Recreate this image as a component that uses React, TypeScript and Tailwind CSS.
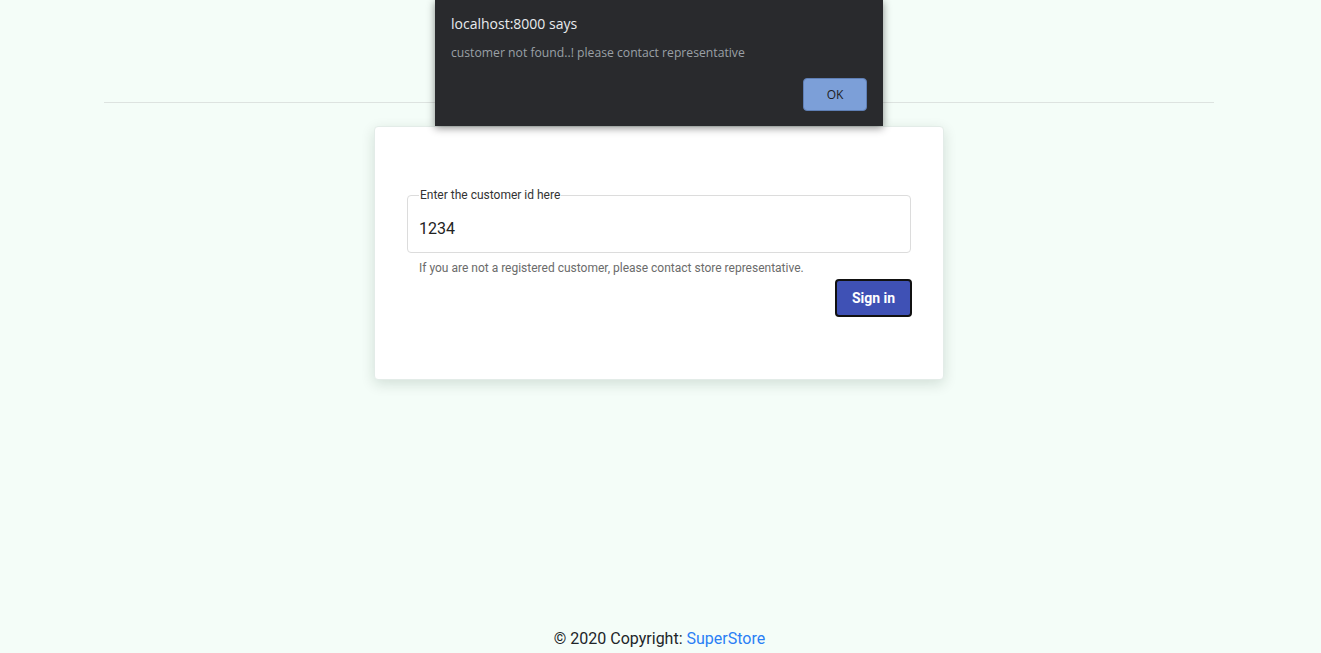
import { useState } from "react";

const AlertDialog = () => (
  <div className="absolute left-[435px] top-0 w-[448px] h-[126px] bg-[#292a2d] shadow-[0_2px_8px_rgba(0,0,0,0.45)] font-['Open_Sans',sans-serif]">
    <div className="px-4 pt-[14px]">
      <div className="text-[14px] leading-5 text-[#e8eaed]">localhost:8000 says</div>
      <div className="mt-[9px] text-[12.2px] leading-5 text-[#9aa0a6]">
        customer not found..! please contact representative
      </div>
      <div className="mt-[15px] flex justify-end">
        <button className="h-[33px] w-16 rounded bg-[#7c9fd8] border border-[#5f7fb5] text-[12px] text-[#202124]">
          OK
        </button>
      </div>
    </div>
  </div>
);

const LoginCard = () => {
  const [customerId, setCustomerId] = useState("1234");

  return (
    <div className="mx-auto w-[570px] rounded bg-white pl-[32px] pr-[31px] pt-[64px] pb-[62px] shadow-[0_4px_14px_rgba(0,40,20,0.14)] border border-[#e3ece8]">
      {/* Outlined text field */}
      <fieldset className="h-[64px] -mt-[2px] mr-[1px] rounded border border-[#dcdcdc] px-[11px]">
        <legend className="px-[1px] text-[12px] leading-3 text-[#333]">
          Enter the customer id here
        </legend>
        <input
          value={customerId}
          onChange={(e) => setCustomerId(e.target.value)}
          className="mt-[16px] w-full bg-transparent text-[16px] text-[#222] outline-none"
        />
      </fieldset>
      <p className="mt-[7px] pl-[12px] text-[12px] leading-4 text-[#6b6b6b]">
        If you are not a registered customer, please contact store representative.
      </p>
      <div className="mt-[3px] flex justify-end">
        <button className="h-[38px] w-[77px] rounded border-2 border-[#111] bg-[#3f51b5] text-[14px] font-bold text-white">
          Sign in
        </button>
      </div>
    </div>
  );
};

export default function App() {
  return (
    <div className="relative flex min-h-screen flex-col bg-[#f4fdf8] font-['Roboto',sans-serif]">
      {/* Header area */}
      <div className="h-[102px]" />
      <div className="pr-[3px]">
        <div className="mx-auto w-[1110px] border-t border-[#dde3e0]" />
      </div>

      <main className="mt-[23px] flex-1 pr-[3px]">
        <LoginCard />
      </main>

      <footer className="pb-[2px] pr-[2px] text-center text-[16px] text-[#212529]">
        © 2020 Copyright: <a className="text-[#2a7ff5]">SuperStore</a>
      </footer>

      <AlertDialog />
    </div>
  );
}
